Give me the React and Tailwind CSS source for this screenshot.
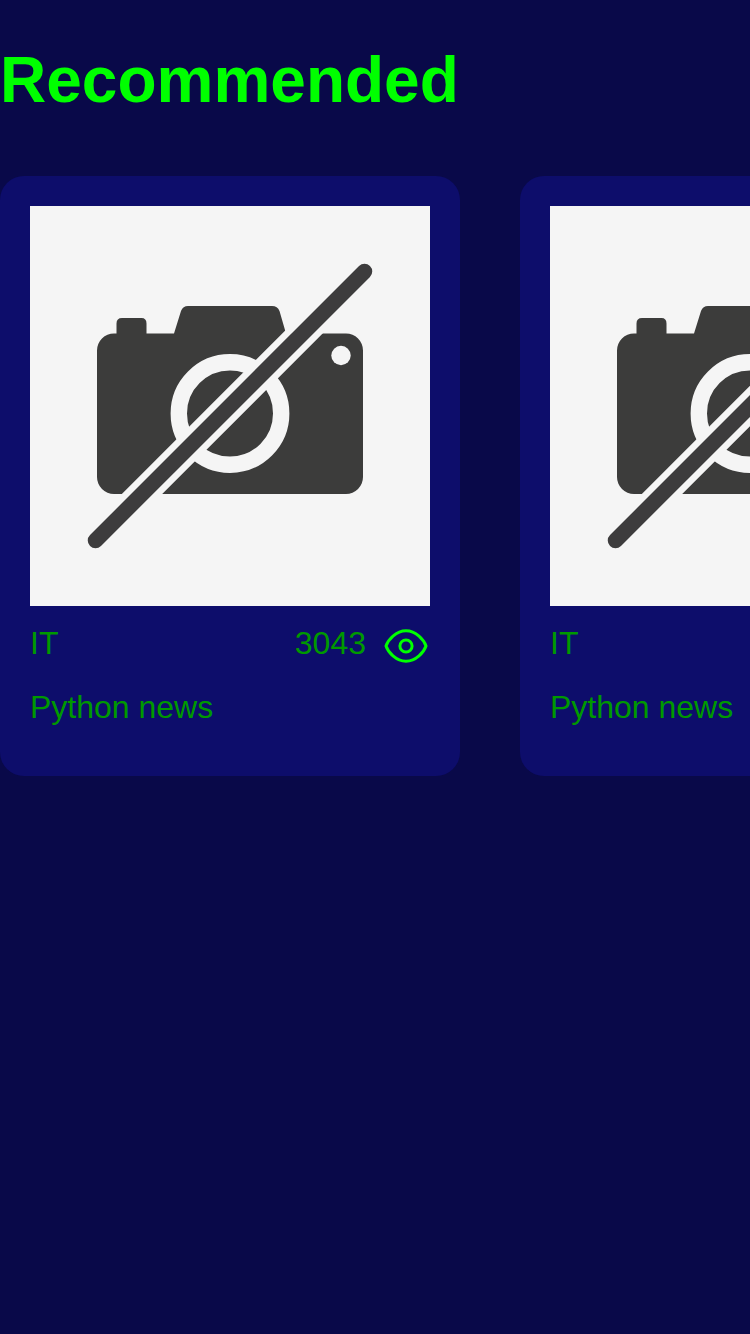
const articles = [
  { id: 1, category: "IT", views: 3043, title: "Python news" },
  { id: 2, category: "IT", views: 3043, title: "Python news" },
];

function NoPhoto() {
  return (
    <svg className="block size-[400px] shrink-0 bg-[#f5f5f5]" viewBox="30 206 400 400" fill="none">
      <path
        d="M114 333.500H116.500V323.500Q116.500 318 122 318H141.500Q146.500 318 146.500 323.500V333.500H174L181 311Q183 306 188 306H272Q277.500 306 279.500 311L286 333.500H346A17 17 0 0 1 363 350.500V477A17 17 0 0 1 346 494H114A17 17 0 0 1 97 477V350.500A17 17 0 0 1 114 333.500Z"
        fill="#3c3c3b"
      />
      <circle cx="230" cy="413.500" r="51.200" stroke="#f5f5f5" strokeWidth="16.400" />
      <circle cx="341" cy="355.500" r="9.700" fill="#f5f5f5" />
      <path d="M95.500 540.500L364.500 271.500" stroke="#f5f5f5" strokeWidth="28.500" strokeLinecap="round" />
      <path d="M95.500 540.500L364.500 271.500" stroke="#3d3c3d" strokeWidth="15.500" strokeLinecap="round" />
    </svg>
  );
}

function Eye() {
  return (
    <svg className="block h-10 w-12 shrink-0" viewBox="382 626 48 40" fill="none" stroke="#00ff00" strokeWidth="3">
      <path d="M386 646C388 640 396 630.800 406 630.800S424 640 426 646C424 652 416 661.200 406 661.200S388 652 386 646Z" strokeLinejoin="round" />
      <circle cx="406" cy="646" r="6.100" />
    </svg>
  );
}

function Card({ article }) {
  return (
    <article className="flex h-[600px] w-[460px] shrink-0 flex-col rounded-[24px] bg-[#0d0d6b] p-[30px] text-[32px] leading-[36px] text-[#009900]">
      <NoPhoto />
      <div className="mt-5 flex h-10 items-start justify-between">
        <span className="-mt-px">{article.category}</span>
        <div className="flex items-start gap-4">
          <span className="-mt-px">{article.views}</span>
          <Eye />
        </div>
      </div>
      <p className="mt-[23px]">{article.title}</p>
    </article>
  );
}

export default function App() {
  return (
    <main className="h-[1334px] w-[750px] overflow-hidden bg-[#090949] pt-11 font-['Liberation_Sans',Arial,sans-serif]">
      <h1 className="text-[64px] leading-[73px] font-bold text-[#00ff00]">Recommended</h1>
      <div className="mt-[59px] flex gap-[60px]">
        {articles.map((article) => (
          <Card key={article.id} article={article} />
        ))}
      </div>
    </main>
  );
}
